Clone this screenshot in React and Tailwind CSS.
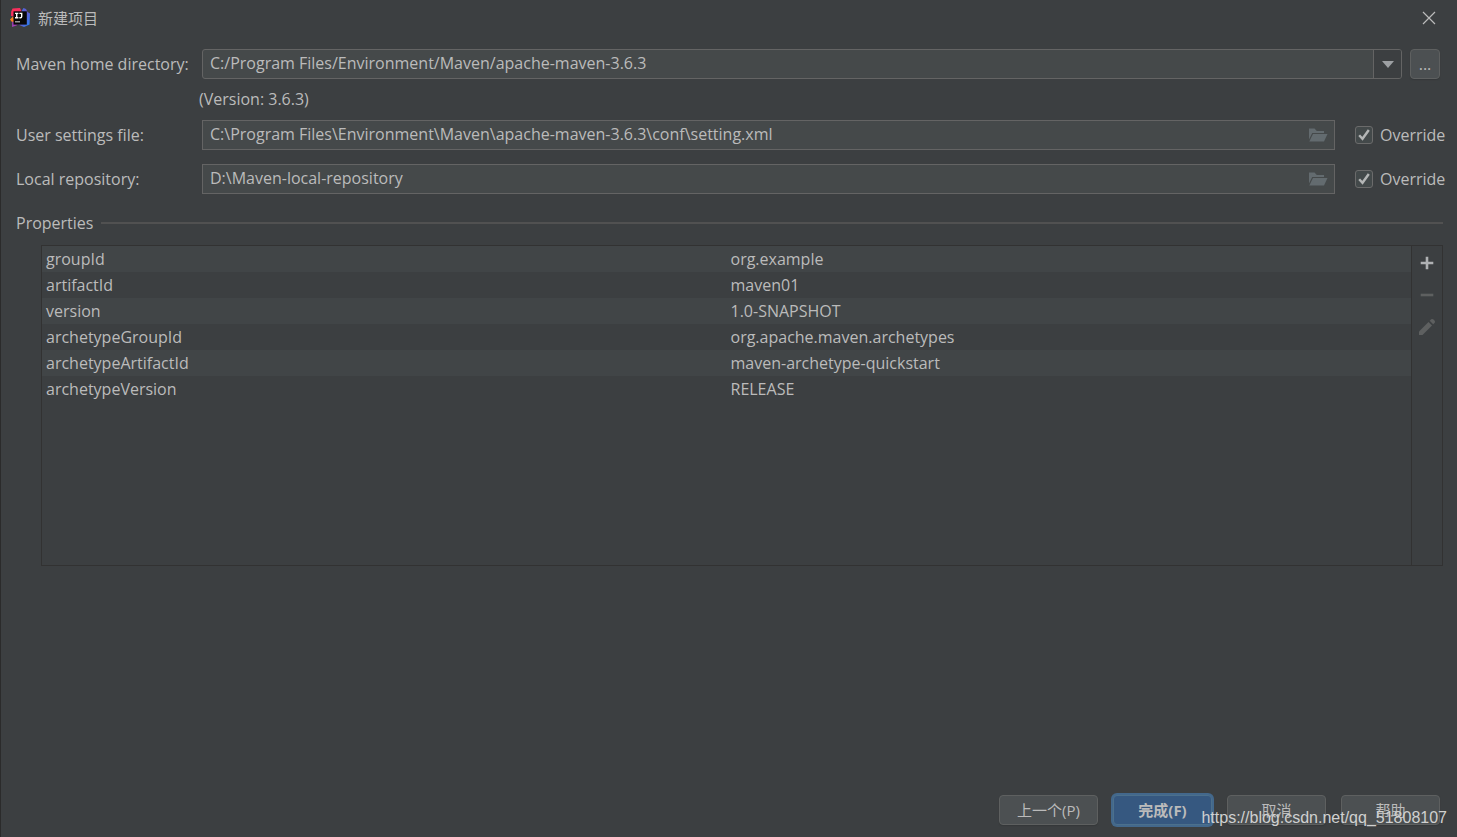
import { useState } from "react";

const properties = [
  { name: "groupId", value: "org.example" },
  { name: "artifactId", value: "maven01" },
  { name: "version", value: "1.0-SNAPSHOT" },
  { name: "archetypeGroupId", value: "org.apache.maven.archetypes" },
  { name: "archetypeArtifactId", value: "maven-archetype-quickstart" },
  { name: "archetypeVersion", value: "RELEASE" },
];

const IdeaLogo = () => (
  <svg width="20" height="20" viewBox="0 0 20 20" aria-hidden>
    <defs>
      <linearGradient id="ideaBlue" x1="0" y1="0" x2="1" y2="1">
        <stop offset="0" stopColor="#2f7bf5" />
        <stop offset="0.45" stopColor="#6a55c8" />
        <stop offset="1" stopColor="#1f86fa" />
      </linearGradient>
      <linearGradient id="ideaPink" x1="0" y1="0" x2="1" y2="1">
        <stop offset="0" stopColor="#fe3157" />
        <stop offset="1" stopColor="#f0286a" />
      </linearGradient>
    </defs>
    <path d="M11 4L13.5 0L16 1L17.5 4L20 5.5L19.5 16.5L14 19L8 16.5Z" fill="url(#ideaBlue)" />
    <path d="M2.5 0.5L10 0L12 4.5L6 9L1 8L1.2 3.5Z" fill="url(#ideaPink)" />
    <path d="M0 11.5L3 8.5L5 14L2 14Z" fill="#fc801d" />
    <path d="M2.2 13.5L9 15.5L6.5 17.5L2 19Z" fill="#a23fb5" />
    <rect x="3.5" y="3.3" width="13.3" height="13.3" fill="#080808" />
    <path
      d="M5 5.4H8.4M6.7 5.4V9.8M5 9.8H8.4M9.4 5.4H11.7V8.5Q11.7 9.8 10.5 9.8H9.4"
      stroke="#fff"
      strokeWidth="1.4"
      fill="none"
    />
    <rect x="5" y="13.2" width="5" height="1.2" fill="#bbb" />
  </svg>
);

const FolderIcon = () => (
  <svg width="20" height="16" viewBox="0 0 20 16" fill="#636b6f" aria-hidden>
    <path d="M1 1.5H6.5L8.8 4H16V6H4.2L1 12.5Z" />
    <path d="M5 7H19.5L16 14.5H1.3Z" />
  </svg>
);

const PathField = ({ id, label, value }) => {
  const [path, setPath] = useState(value);
  const [override, setOverride] = useState(true);

  return (
    <div className="flex items-center">
      <label htmlFor={id} className="w-[186px] shrink-0">
        {label}
      </label>
      <div className="flex h-[30px] flex-1 items-center border border-[#646464] bg-[#45494a] pr-1.5">
        <input
          id={id}
          className="h-full min-w-0 flex-1 bg-transparent pb-0.5 pl-[7px] outline-none"
          value={path}
          onChange={(event) => setPath(event.target.value)}
        />
        <button type="button" aria-label="Browse">
          <FolderIcon />
        </button>
      </div>
      <label className="ml-5 flex w-[88px] shrink-0 items-center gap-[7px]">
        <span className="grid size-[18px] shrink-0 place-items-center">
          <input
            type="checkbox"
            className="col-start-1 row-start-1 size-[18px] appearance-none rounded-[3px] border border-[#6b6b6b] bg-[#43494a]"
            checked={override}
            onChange={(event) => setOverride(event.target.checked)}
          />
          {override && (
            <svg
              className="pointer-events-none col-start-1 row-start-1"
              width="12"
              height="12"
              viewBox="0 0 12 12"
              fill="none"
              stroke="#b4b6b6"
              strokeWidth="2.4"
              aria-hidden
            >
              <path d="M1.2 6.2L4.5 9.8L10.8 1" />
            </svg>
          )}
        </span>
        Override
      </label>
    </div>
  );
};

const DialogButton = ({ children }) => (
  <button
    type="button"
    className="h-[30px] w-[99px] rounded border border-[#5e6060] bg-[#4c5052] text-[15px] shadow-[0_1px_1px_#35383a]"
  >
    {children}
  </button>
);

const App = () => {
  const [home, setHome] = useState(
    "C:/Program Files/Environment/Maven/apache-maven-3.6.3"
  );

  return (
    <div className="relative flex min-h-screen flex-col border-l border-[#2b2b2b] bg-[#3c3f41] font-['Open_Sans','Noto_Sans_CJK_SC',sans-serif] text-[16px] leading-[22px] text-[#bbbbbb]">
      <header className="flex h-9 items-center pl-[9px] pr-[21px]">
        <IdeaLogo />
        <h1 className="ml-2 flex-1 text-[15px]">新建项目</h1>
        <button type="button" aria-label="Close">
          <svg width="14" height="14" viewBox="0 0 14 14" stroke="#bbbbbb" strokeWidth="1.2" aria-hidden>
            <path d="M1 1L13 13M13 1L1 13" />
          </svg>
        </button>
      </header>

      <main className="flex flex-col pl-[15px] pr-3.5 pt-[13px]">
        <div className="flex items-center pr-[3px]">
          <label htmlFor="maven-home" className="w-[186px] shrink-0">
            Maven home directory:
          </label>
          <div className="grid flex-1 grid-cols-[1fr_28px] overflow-hidden rounded-[3px] border border-[#646464] bg-[#45494a]">
            <select
              id="maven-home"
              className="col-span-2 col-start-1 row-start-1 h-7 appearance-none bg-transparent pb-0.5 pl-[7px] outline-none"
              value={home}
              onChange={(event) => setHome(event.target.value)}
            >
              <option>C:/Program Files/Environment/Maven/apache-maven-3.6.3</option>
            </select>
            <span className="pointer-events-none col-start-2 row-start-1 grid place-items-center border-l border-[#646464] bg-[#3c3f41]">
              <svg width="12" height="7" viewBox="0 0 12 7" fill="#9da0a3" aria-hidden>
                <path d="M0 0H12L6 7Z" />
              </svg>
            </span>
          </div>
          <button
            type="button"
            className="ml-2 size-[30px] rounded border border-[#5e6060] bg-[#4c5052] shadow-[0_1px_1px_#35383a]"
          >
            ...
          </button>
        </div>

        <p className="mb-2.5 mt-[9px] pl-[183px]">(Version: 3.6.3)</p>

        <div className="flex flex-col gap-3.5">
          <PathField
            id="settings-file"
            label="User settings file:"
            value="C:\Program Files\Environment\Maven\apache-maven-3.6.3\conf\setting.xml"
          />
          <PathField
            id="local-repository"
            label="Local repository:"
            value="D:\Maven-local-repository"
          />
        </div>

        <div className="mt-[18px] flex items-center gap-2">
          <h2>Properties</h2>
          <div className="h-0.5 flex-1 bg-[#515151]" />
        </div>

        <div className="ml-[25px] mt-[11px] flex h-[321px] border border-[#323232]">
          <div className="flex-1">
            <table className="w-full table-fixed border-collapse text-left">
              <tbody>
                {properties.map((property) => (
                  <tr key={property.name} className="h-[26px] odd:bg-[#414547]">
                    <th scope="row" className="w-1/2 px-1 py-0 font-normal">
                      {property.name}
                    </th>
                    <td className="px-1 py-0">{property.value}</td>
                  </tr>
                ))}
              </tbody>
            </table>
          </div>
          <div className="flex w-[31px] flex-col items-center gap-3 border-l border-[#323232] pt-[7px]">
            <button type="button" aria-label="Add">
              <svg width="20" height="20" viewBox="0 0 20 20" fill="#afb1b3" aria-hidden>
                <path d="M8.7 3.7H11.3V8.7H16.3V11.3H11.3V16.3H8.7V11.3H3.7V8.7H8.7Z" />
              </svg>
            </button>
            <button type="button" aria-label="Remove" disabled>
              <svg width="20" height="20" viewBox="0 0 20 20" fill="#5e6060" aria-hidden>
                <rect x="3.7" y="8.7" width="12.6" height="2.6" />
              </svg>
            </button>
            <button type="button" aria-label="Edit" disabled>
              <svg width="20" height="20" viewBox="0 0 20 20" fill="#5e6060" aria-hidden>
                <path d="M2 14.5L11.5 5L15 8.5L5.5 18H2Z" />
                <path d="M12.7 3.8L14.2 2.3Q15.2 1.5 16.2 2.3L17.7 3.8Q18.5 4.8 17.7 5.8L16.2 7.3Z" />
              </svg>
            </button>
          </div>
        </div>
      </main>

      <footer className="mt-auto flex justify-end gap-[15px] pb-3 pr-[17px]">
        <DialogButton>上一个(P)</DialogButton>
        <button
          type="button"
          className="h-[30px] w-[99px] rounded border border-[#4c708c] bg-[#365880] text-[15px] font-bold ring-2 ring-[#43688c]"
        >
          完成(F)
        </button>
        <DialogButton>取消</DialogButton>
        <DialogButton>帮助</DialogButton>
      </footer>

      <p className="pointer-events-none absolute bottom-2 right-2.5 font-['Liberation_Sans',sans-serif] text-[16px] text-[#d0d0d0]">
        https://blog.csdn.net/qq_51808107
      </p>
    </div>
  );
};

export default App;
